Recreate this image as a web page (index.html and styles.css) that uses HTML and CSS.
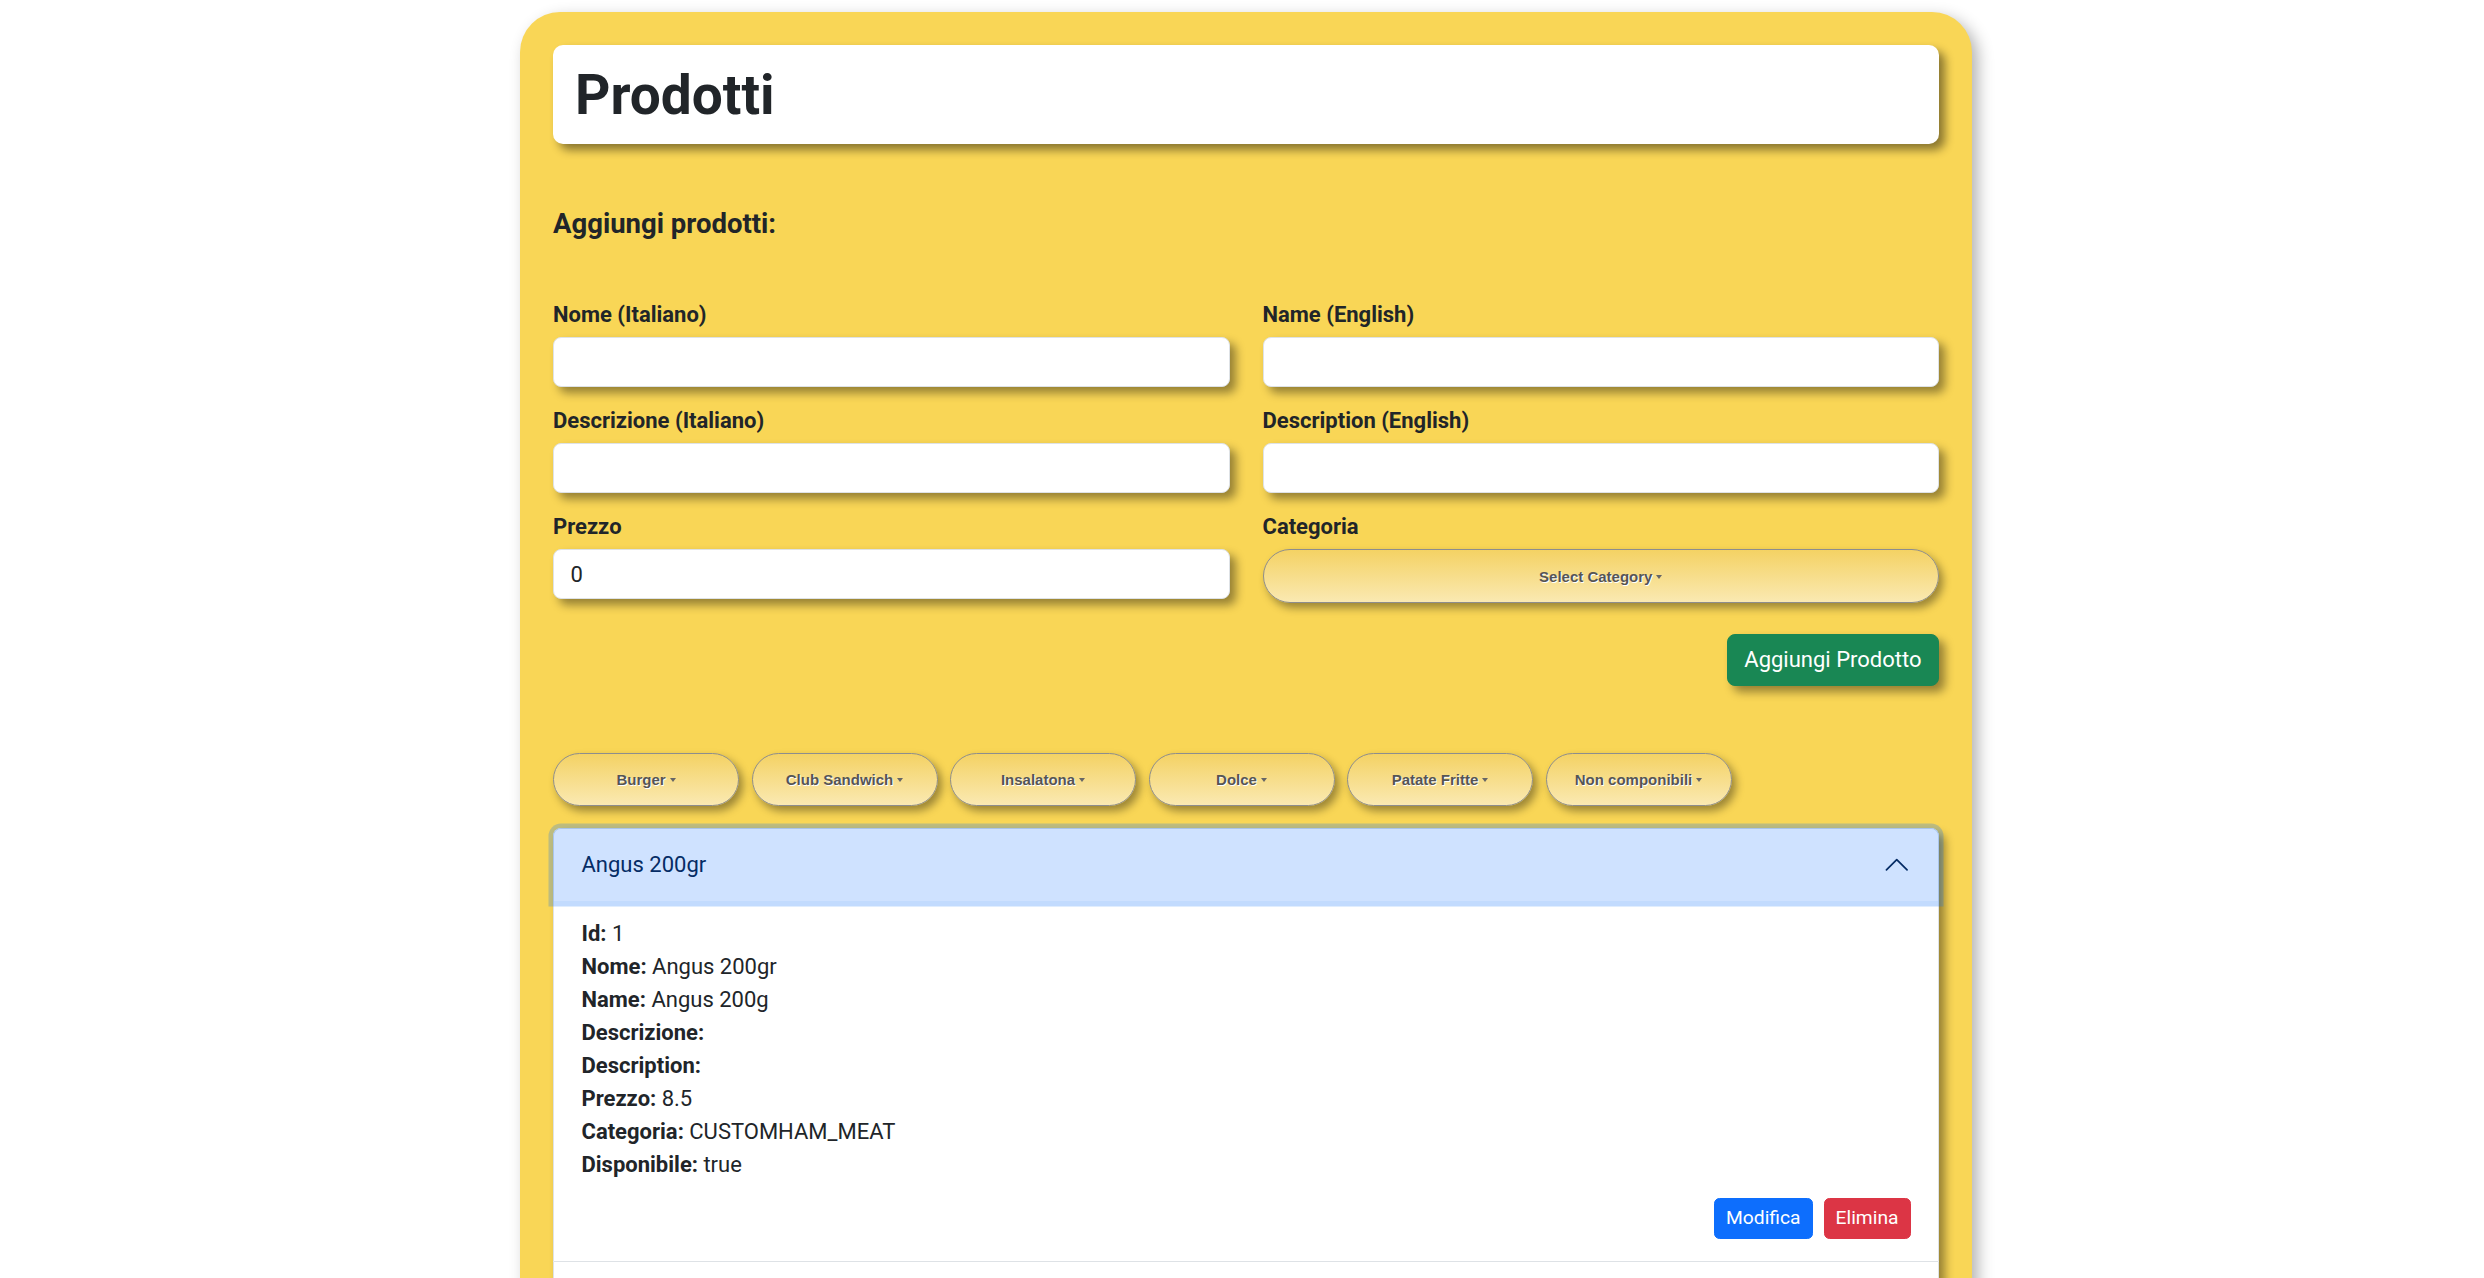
FILE: index.html
```html
<!DOCTYPE html>
<html lang="it">
<head>
<meta charset="utf-8">
<title>Prodotti</title>
<link rel="stylesheet" href="styles.css">
</head>
<body>
<main class="panel">
  <header class="title-card">
    <h1 class="title">Prodotti</h1>
  </header>

  <h2 class="section-title">Aggiungi prodotti:</h2>

  <form class="product-form">
    <div class="form-grid">
      <div class="field">
        <label class="field-label">Nome (Italiano)</label>
        <input class="field-input" type="text">
      </div>
      <div class="field">
        <label class="field-label">Name (English)</label>
        <input class="field-input" type="text">
      </div>
      <div class="field">
        <label class="field-label">Descrizione (Italiano)</label>
        <input class="field-input" type="text">
      </div>
      <div class="field">
        <label class="field-label">Description (English)</label>
        <input class="field-input" type="text">
      </div>
      <div class="field">
        <label class="field-label">Prezzo</label>
        <input class="field-input" type="text" value="0">
      </div>
      <div class="field">
        <label class="field-label">Categoria</label>
        <button type="button" class="pill pill-wide">Select Category<span class="caret"></span></button>
      </div>
    </div>
    <div class="form-actions">
      <button type="button" class="btn btn-success">Aggiungi Prodotto</button>
    </div>
  </form>

  <nav class="category-bar">
    <button type="button" class="pill pill-cat">Burger<span class="caret"></span></button>
    <button type="button" class="pill pill-cat">Club Sandwich<span class="caret"></span></button>
    <button type="button" class="pill pill-cat">Insalatona<span class="caret"></span></button>
    <button type="button" class="pill pill-cat">Dolce<span class="caret"></span></button>
    <button type="button" class="pill pill-cat">Patate Fritte<span class="caret"></span></button>
    <button type="button" class="pill pill-cat">Non componibili<span class="caret"></span></button>
  </nav>

  <section class="accordion">
    <div class="acc-item">
      <button type="button" class="acc-header acc-header-open">
        <span class="acc-title">Angus 200gr</span>
        <svg class="acc-icon" viewBox="0 0 16 16" fill="none" stroke="#052c65" stroke-linecap="round" stroke-linejoin="round"><path d="M2 11L8 5L14 11"/></svg>
      </button>
      <div class="acc-body">
        <div class="detail-line"><strong>Id:</strong> 1</div>
        <div class="detail-line"><strong>Nome:</strong> Angus 200gr</div>
        <div class="detail-line"><strong>Name:</strong> Angus 200g</div>
        <div class="detail-line"><strong>Descrizione:</strong></div>
        <div class="detail-line"><strong>Description:</strong></div>
        <div class="detail-line"><strong>Prezzo:</strong> 8.5</div>
        <div class="detail-line"><strong>Categoria:</strong> CUSTOMHAM_MEAT</div>
        <div class="detail-line"><strong>Disponibile:</strong> true</div>
        <div class="acc-actions">
          <button type="button" class="btn-sm btn-primary">Modifica</button>
          <button type="button" class="btn-sm btn-danger">Elimina</button>
        </div>
      </div>
    </div>
    <div class="acc-item">
      <button type="button" class="acc-header">
        <span class="acc-title">Angus 300gr</span>
        <svg class="acc-icon" viewBox="0 0 16 16" fill="none" stroke="#212529" stroke-linecap="round" stroke-linejoin="round"><path d="M2 5L8 11L14 5"/></svg>
      </button>
    </div>
  </section>
</main>
</body>
</html>
```

FILE: styles.css
```css
* {
  box-sizing: border-box;
}

html,
body {
  margin: 0;
  background: #ffffff;
}

body {
  padding: 12px 0 0 8px;
  font-family: Roboto, "Noto Sans", "Liberation Sans", sans-serif;
  font-size: 22px;
  line-height: 1.5;
  color: #212529;
}

.panel {
  display: block;
  width: 1452px;
  margin: 0 auto;
  padding: 33px;
  background: #f9d656;
  border-radius: 40px;
  box-shadow: 6px 6px 16px rgba(0, 0, 0, 0.3);
}

.title-card {
  background: #ffffff;
  border-radius: 10px;
  padding: 16.5px 22px;
  box-shadow: 6px 6px 10px rgba(0, 0, 0, 0.45);
}

.title {
  margin: 0;
  font-size: 55px;
  line-height: 1.2;
  font-weight: 700;
}

.section-title {
  margin: 63px 0 58px;
  font-size: 27.5px;
  line-height: 1.2;
  font-weight: 700;
}

.product-form {
  margin: 0;
}

.form-grid {
  display: grid;
  grid-template-columns: 1fr 1fr;
  column-gap: 33px;
  row-gap: 17px;
}

.field {
  display: flex;
  flex-direction: column;
}

.field-label {
  font-weight: 700;
  line-height: 33px;
  margin-bottom: 6px;
}

.field-input {
  height: 50px;
  padding: 0 16.5px;
  font: inherit;
  color: #212529;
  background: #ffffff;
  border: 1px solid #dee2e6;
  border-radius: 8px;
  box-shadow: 6px 6px 10px rgba(0, 0, 0, 0.4);
  outline: none;
}

.pill {
  display: inline-flex;
  align-items: center;
  justify-content: center;
  gap: 4px;
  height: 54px;
  padding: 0 12px;
  border: 1px solid #8d8d8d;
  border-radius: 27px;
  background: linear-gradient(to bottom, #f4d264, #fae9b2);
  font-family: "Liberation Sans", Arial, sans-serif;
  font-size: 15px;
  font-weight: 700;
  color: #555555;
  text-shadow: 1px 1px 0 #ffffff;
  box-shadow: 4px 5px 8px rgba(0, 0, 0, 0.38);
}

.pill-wide {
  width: 100%;
}

.pill-cat {
  width: 186px;
  height: 53px;
}

.caret {
  display: inline-block;
  width: 0;
  height: 0;
  margin-top: 1px;
  border-top: 4px solid #666666;
  border-left: 3.5px solid transparent;
  border-right: 3.5px solid transparent;
}

.form-actions {
  display: flex;
  justify-content: flex-end;
  margin-top: 31px;
}

.btn {
  font-family: inherit;
  font-size: 22px;
  line-height: 33px;
  padding: 8.25px 16.5px;
  border: 1px solid transparent;
  border-radius: 8px;
  color: #ffffff;
}

.btn-success {
  background: #198754;
  border-color: #198754;
  box-shadow: 6px 6px 10px rgba(0, 0, 0, 0.4);
}

.category-bar {
  display: flex;
  gap: 12.5px;
  margin-top: 67px;
}

.accordion {
  margin-top: 22px;
  background: #ffffff;
  border-radius: 8px 8px 0 0;
  box-shadow: 6px 6px 10px rgba(0, 0, 0, 0.4);
}

.acc-item {
  background: #ffffff;
  border: 1px solid #dee2e6;
}

.acc-item:first-child {
  border-radius: 8px 8px 0 0;
}

.acc-item + .acc-item {
  border-top: 0;
}

.acc-header {
  display: flex;
  align-items: center;
  width: 100%;
  padding: 19.5px 27.5px;
  font-family: inherit;
  font-size: 22px;
  line-height: 33px;
  text-align: left;
  color: #212529;
  background: #ffffff;
  border: 0;
}

.acc-header-open {
  position: relative;
  z-index: 1;
  color: #052c65;
  background: #cfe2ff;
  border-radius: 7px 7px 0 0;
  box-shadow: 0 0 0 5.5px rgba(13, 110, 253, 0.25);
}

.acc-title {
  flex: 1;
}

.acc-icon {
  width: 27.5px;
  height: 27.5px;
  flex-shrink: 0;
}

.acc-body {
  padding: 16px 27.5px 22px;
}

.detail-line {
  line-height: 33px;
}

.acc-actions {
  display: flex;
  justify-content: flex-end;
  gap: 11px;
  margin-top: 17px;
}

.btn-sm {
  font-family: inherit;
  font-size: 19.25px;
  line-height: 1.5;
  padding: 5.5px 11px;
  border: 1px solid transparent;
  border-radius: 5.5px;
  color: #ffffff;
}

.btn-primary {
  background: #0d6efd;
  border-color: #0d6efd;
}

.btn-danger {
  background: #dc3545;
  border-color: #dc3545;
}
```
